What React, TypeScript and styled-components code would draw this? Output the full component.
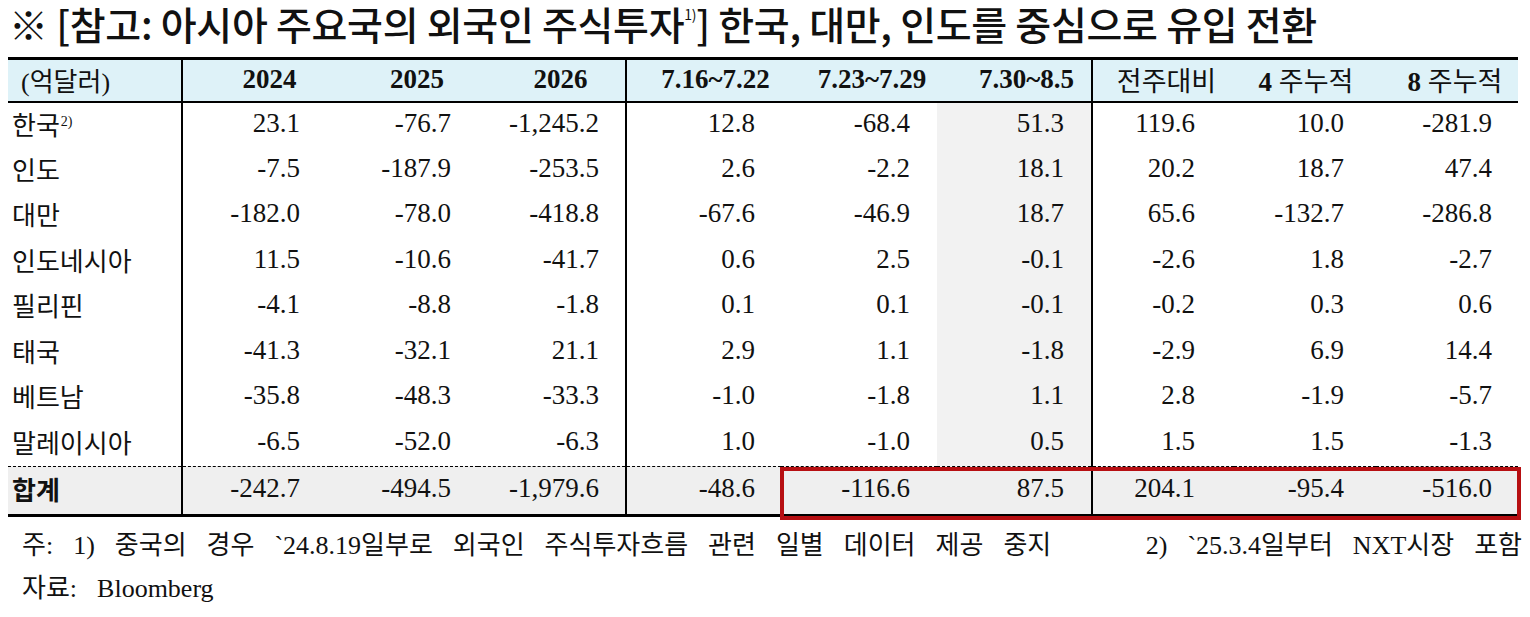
import styled, { createGlobalStyle } from 'styled-components';

const GlobalStyle = createGlobalStyle`
  html, body {
    margin: 0;
    padding: 0;
    background: #fff;
  }
  body {
    font-family: 'Liberation Serif', 'Noto Sans CJK KR', serif;
    color: #111;
  }
`;

type Col = {
  width: number;
  padRight: number;
  headPad: number;
  divider?: boolean;
  shaded?: boolean;
};

// widths add up to the 1510px table; paddings follow where the numbers sit in the source
const cols: Col[] = [
  { width: 174, padRight: 0, headPad: 0, divider: true },
  { width: 148, padRight: 30, headPad: 26 },
  { width: 148, padRight: 27, headPad: 26 },
  { width: 148, padRight: 26, headPad: 18, divider: true },
  { width: 155, padRight: 26, headPad: 23 },
  { width: 156, padRight: 27, headPad: 26 },
  { width: 155, padRight: 27, headPad: 25, divider: true, shaded: true },
  { width: 142, padRight: 39, headPad: 6 },
  { width: 142, padRight: 32, headPad: 2 },
  { width: 142, padRight: 26, headPad: 16 },
];

const rows: { name: string; note?: string; values: string[] }[] = [
  { name: '한국', note: '2)', values: ['23.1', '-76.7', '-1,245.2', '12.8', '-68.4', '51.3', '119.6', '10.0', '-281.9'] },
  { name: '인도', values: ['-7.5', '-187.9', '-253.5', '2.6', '-2.2', '18.1', '20.2', '18.7', '47.4'] },
  { name: '대만', values: ['-182.0', '-78.0', '-418.8', '-67.6', '-46.9', '18.7', '65.6', '-132.7', '-286.8'] },
  { name: '인도네시아', values: ['11.5', '-10.6', '-41.7', '0.6', '2.5', '-0.1', '-2.6', '1.8', '-2.7'] },
  { name: '필리핀', values: ['-4.1', '-8.8', '-1.8', '0.1', '0.1', '-0.1', '-0.2', '0.3', '0.6'] },
  { name: '태국', values: ['-41.3', '-32.1', '21.1', '2.9', '1.1', '-1.8', '-2.9', '6.9', '14.4'] },
  { name: '베트남', values: ['-35.8', '-48.3', '-33.3', '-1.0', '-1.8', '1.1', '2.8', '-1.9', '-5.7'] },
  { name: '말레이시아', values: ['-6.5', '-52.0', '-6.3', '1.0', '-1.0', '0.5', '1.5', '1.5', '-1.3'] },
];

const total = ['-242.7', '-494.5', '-1,979.6', '-48.6', '-116.6', '87.5', '204.1', '-95.4', '-516.0'];

function App() {
  return (
    <Page>
      <GlobalStyle />
      <Title>
        ※ [참고: 아시아 주요국의 외국인 주식투자<TitleSup>1)</TitleSup>] 한국, 대만, 인도를 중심으로 유입 전환
      </Title>

      <TableWrap>
        <Sheet>
          <colgroup>
            {cols.map((c, i) => (
              <col key={i} style={{ width: c.width }} />
            ))}
          </colgroup>
          <thead>
            <HeadRow>
              <UnitCell $divider>(억달러)</UnitCell>
              <HeadCell $pad={cols[1].headPad}>2024</HeadCell>
              <HeadCell $pad={cols[2].headPad}>2025</HeadCell>
              <HeadCell $pad={cols[3].headPad} $divider>2026</HeadCell>
              <HeadCell $pad={cols[4].headPad}>7.16~7.22</HeadCell>
              <HeadCell $pad={cols[5].headPad}>7.23~7.29</HeadCell>
              <HeadCell $pad={cols[6].headPad} $divider>7.30~8.5</HeadCell>
              <HeadCell $pad={cols[7].headPad} $plain>전주대비</HeadCell>
              <HeadCell $pad={cols[8].headPad} $plain>
                <b>4</b> 주누적
              </HeadCell>
              <HeadCell $pad={cols[9].headPad} $plain>
                <b>8</b> 주누적
              </HeadCell>
            </HeadRow>
          </thead>
          <tbody>
            {rows.map((r) => (
              <BodyRow key={r.name}>
                <LabelCell $divider>
                  {r.name}
                  {r.note && <LabelSup>{r.note}</LabelSup>}
                </LabelCell>
                {r.values.map((v, i) => {
                  const c = cols[i + 1];
                  return (
                    <NumCell key={i} $pad={c.padRight} $divider={c.divider} $shaded={c.shaded}>
                      {v}
                    </NumCell>
                  );
                })}
              </BodyRow>
            ))}
            <TotalRow>
              <LabelCell $divider $bold>합계</LabelCell>
              {total.map((v, i) => {
                const c = cols[i + 1];
                return (
                  <NumCell key={i} $pad={c.padRight} $divider={c.divider}>
                    {v}
                  </NumCell>
                );
              })}
            </TotalRow>
          </tbody>
        </Sheet>
        <Highlight />
      </TableWrap>

      <Notes>
        <NoteLine>
          <span>주: 1) 중국의 경우 `24.8.19일부로 외국인 주식투자흐름 관련 일별 데이터 제공 중지</span>
          <span>2) `25.3.4일부터 NXT시장 포함</span>
        </NoteLine>
        <NoteLine>
          <span>자료: Bloomberg</span>
        </NoteLine>
      </Notes>
    </Page>
  );
}

const Page = styled.div`
  width: 1530px;
  height: 617px;
  overflow: hidden;
  background: #fff;
`;

const Title = styled.h1`
  margin: 0;
  height: 57px;
  padding-left: 9px;
  font-family: 'Noto Sans CJK KR', sans-serif;
  font-weight: 500;
  font-size: 39px;
  line-height: 28px;
  letter-spacing: -0.3px;
  color: #111;
  white-space: nowrap;
`;

const TitleSup = styled.span`
  font-size: 14px;
  vertical-align: 20px;
  font-weight: 400;
`;

const TableWrap = styled.div`
  position: relative;
  width: 1510px;
  margin-left: 8px;
`;

const Sheet = styled.table`
  width: 1510px;
  border-collapse: collapse;
  table-layout: fixed;
  border-top: 3px solid #000;
  border-bottom: 3px solid #000;
  font-size: 27px;
`;

const HeadRow = styled.tr`
  height: 43px;
  background: #def2f8;
  border-bottom: 2px solid #000;
`;

const HeadCell = styled.th<{ $pad: number; $divider?: boolean; $plain?: boolean }>`
  padding: 0 0 2px ${(p) => p.$pad}px;
  text-align: center;
  font-weight: ${(p) => (p.$plain ? 400 : 700)};
  white-space: nowrap;
  border-right: ${(p) => (p.$divider ? '2px solid #000' : 'none')};

  b {
    font-weight: 700;
  }
`;

const UnitCell = styled.th<{ $divider?: boolean }>`
  padding: 0 0 2px 13px;
  text-align: left;
  font-weight: 400;
  font-size: 26px;
  white-space: nowrap;
  border-right: ${(p) => (p.$divider ? '2px solid #000' : 'none')};
`;

const BodyRow = styled.tr`
  height: 45.5px;
`;

const TotalRow = styled.tr`
  height: 49px;
  background: #efefef;
  border-top: 1px dashed #000;
`;

const LabelCell = styled.td<{ $divider?: boolean; $bold?: boolean }>`
  padding: 0 0 4px 4px;
  font-size: 26px;
  font-weight: ${(p) => (p.$bold ? 700 : 400)};
  white-space: nowrap;
  border-right: ${(p) => (p.$divider ? '2px solid #000' : 'none')};
`;

const LabelSup = styled.span`
  font-size: 14px;
  vertical-align: 9px;
  margin-left: 1px;
`;

const NumCell = styled.td<{ $pad: number; $divider?: boolean; $shaded?: boolean }>`
  padding: 0 ${(p) => p.$pad}px 4px 0;
  text-align: right;
  white-space: nowrap;
  background: ${(p) => (p.$shaded ? '#f2f2f2' : 'transparent')};
  border-right: ${(p) => (p.$divider ? '2px solid #000' : 'none')};
`;

const Highlight = styled.div`
  position: absolute;
  left: 772px;
  top: 410px;
  width: 741px;
  height: 53px;
  box-sizing: border-box;
  border: 4px solid #b70f12;
  pointer-events: none;
`;

const Notes = styled.div`
  padding: 7px 8px 0 22px;
`;

const NoteLine = styled.div`
  display: flex;
  justify-content: space-between;
  font-size: 26px;
  line-height: 43px;
  word-spacing: 13.5px;
  white-space: nowrap;
  color: #111;
`;

export default App;
